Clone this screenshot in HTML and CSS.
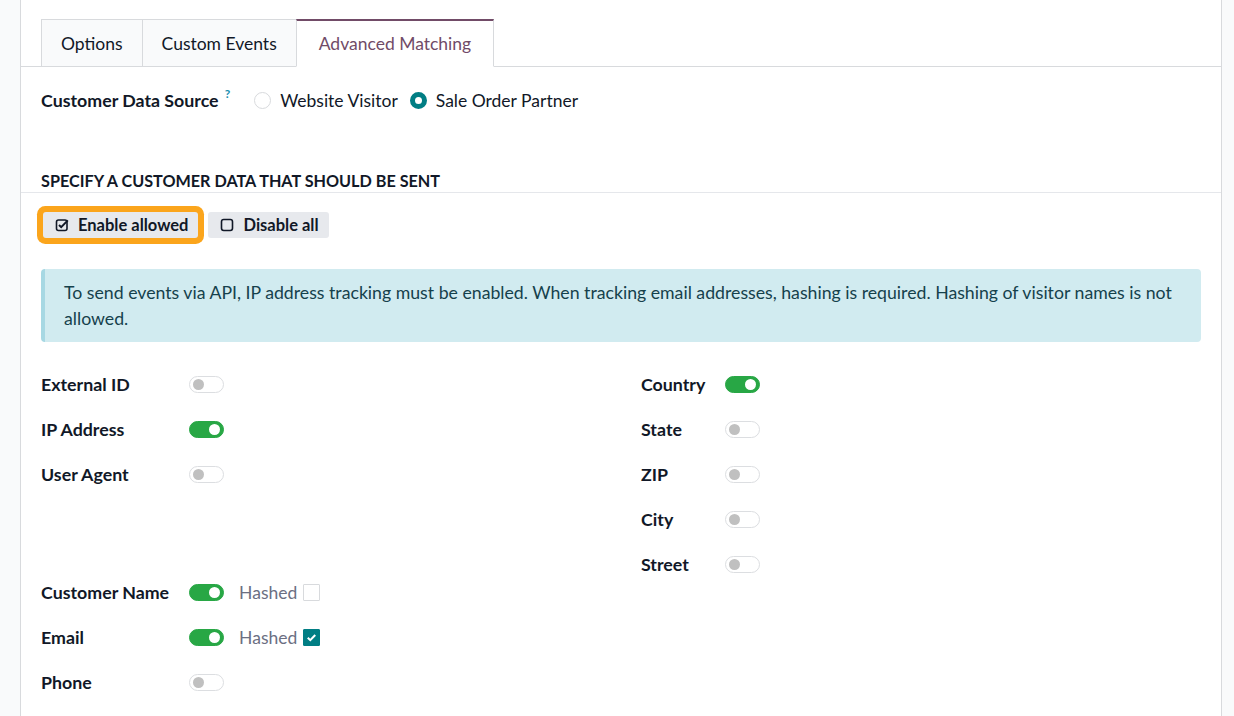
FILE: index.html
```html
<!DOCTYPE html>
<html lang="en">
<head>
    <meta charset="UTF-8">
    <meta name="viewport" content="width=device-width, initial-scale=1.0">
    <title>Advanced Matching</title>
    <link rel="stylesheet" href="styles.css">
</head>
<body>

<div class="sheet">
    <div class="tabs">
        <a class="tab">Options</a>
        <a class="tab">Custom Events</a>
        <a class="tab active">Advanced Matching</a>
    </div>

    <div class="pane">
        <div class="source-row">
            <span class="field-label">Customer Data Source<sup class="help">?</sup></span>
            <label class="radio"><span class="radio-dot"></span>Website Visitor</label>
            <label class="radio checked"><span class="radio-dot"></span>Sale Order Partner</label>
        </div>

        <h3 class="separator">Specify a customer data that should be sent</h3>

        <div class="actions">
            <button class="btn btn-highlight">
                <svg class="btn-icon" viewBox="0 0 14 14" width="14" height="14">
                    <rect x="1.5" y="2" width="10.5" height="10.5" rx="2" fill="none" stroke="currentColor" stroke-width="1.6"/>
                    <path d="M4 7l2.2 2.2L12.8 2.4" fill="none" stroke="currentColor" stroke-width="2"/>
                </svg>
                Enable allowed
            </button>
            <button class="btn">
                <svg class="btn-icon" viewBox="0 0 14 14" width="14" height="14">
                    <rect x="1.5" y="1.5" width="11" height="11" rx="2.2" fill="none" stroke="currentColor" stroke-width="1.6"/>
                </svg>
                Disable all
            </button>
        </div>

        <div class="alert">
            To send events via API, IP address tracking must be enabled. When tracking email addresses, hashing is required. Hashing of visitor names is not allowed.
        </div>

        <div class="fields">
            <div class="field-group">
                <span class="field-label">External ID</span>
                <span class="field-value"><span class="toggle"></span></span>

                <span class="field-label">IP Address</span>
                <span class="field-value"><span class="toggle on"></span></span>

                <span class="field-label">User Agent</span>
                <span class="field-value"><span class="toggle"></span></span>

                <div class="group-gap"></div>

                <span class="field-label">Customer Name</span>
                <span class="field-value">
                    <span class="toggle on"></span>
                    <span class="hashed">Hashed</span>
                    <span class="check"></span>
                </span>

                <span class="field-label">Email</span>
                <span class="field-value">
                    <span class="toggle on"></span>
                    <span class="hashed">Hashed</span>
                    <span class="check checked">
                        <svg viewBox="0 0 10 10" width="11" height="11">
                            <path d="M1.6 5.2l2.3 2.2 4.5-4.6" fill="none" stroke="#fff" stroke-width="1.9"/>
                        </svg>
                    </span>
                </span>

                <span class="field-label">Phone</span>
                <span class="field-value"><span class="toggle"></span></span>
            </div>

            <div class="field-group">
                <span class="field-label">Country</span>
                <span class="field-value"><span class="toggle on"></span></span>

                <span class="field-label">State</span>
                <span class="field-value"><span class="toggle"></span></span>

                <span class="field-label">ZIP</span>
                <span class="field-value"><span class="toggle"></span></span>

                <span class="field-label">City</span>
                <span class="field-value"><span class="toggle"></span></span>

                <span class="field-label">Street</span>
                <span class="field-value"><span class="toggle"></span></span>
            </div>
        </div>
    </div>
</div>

</body>
</html>
```

FILE: styles.css
```css
* {
    box-sizing: border-box;
}
body {
    margin: 0;
    background-color: #f9fafb;
    font-family: Lato, "Open Sans", sans-serif;
    font-size: 17.5px;
    color: #111827;
}
.sheet {
    margin: 0 12px 0 20px;
    min-height: 100vh;
    background-color: #fff;
    border-left: 1px solid #d8dadd;
    border-right: 1px solid #d8dadd;
}

/* notebook tabs */
.tabs {
    display: flex;
    padding: 19px 20px 0;
    border-bottom: 1px solid #d8dadd;
}
.tab {
    height: 48px;
    line-height: 47px;
    padding: 0 19px;
    margin-bottom: -1px;
    background-color: #f9fafb;
    border: 1px solid #d8dadd;
    color: #111827;
    cursor: pointer;
}
.tab + .tab {
    margin-left: -1px;
}
.tab.active {
    padding: 0 22px;
    background-color: #fff;
    border-top: 2px solid #714b67;
    border-bottom-color: #fff;
    color: #714b67;
    line-height: 46px;
}

.pane {
    padding: 20px 20px 0;
}

/* customer data source */
.source-row {
    display: flex;
    align-items: center;
    height: 26px;
}
.field-label {
    font-weight: bold;
    font-size: 17.8px;
    line-height: 24px;
    padding-bottom: 2px;
}
.help {
    color: #1a8fb0;
    font-size: 12px;
    margin-left: 6px;
    vertical-align: 9px;
    line-height: 0;
}
.source-row .field-label {
    margin-right: 24px;
    padding-bottom: 0;
}
.radio {
    display: flex;
    align-items: center;
    margin-right: 12px;
}
.radio-dot {
    width: 17px;
    height: 17px;
    margin-right: 9px;
    border: 1px solid #d8dadd;
    border-radius: 50%;
    background-color: #fff;
}
.radio.checked .radio-dot {
    border: 5px solid #017e84;
}

/* separator */
.separator {
    margin: 57px -20px 0;
    padding: 0 20px;
    height: 23px;
    line-height: 22px;
    font-size: 16.2px;
    font-weight: bold;
    text-transform: uppercase;
    border-bottom: 1px solid #e5e7eb;
}

.actions {
    display: flex;
    gap: 10px;
    margin-top: 19px;
    padding-left: 2px;
}
.btn {
    display: flex;
    align-items: center;
    gap: 9px;
    height: 26px;
    padding: 0 10px 0 12px;
    background-color: #e7e9ed;
    border: none;
    border-radius: 3px;
    font-family: inherit;
    font-size: 16.5px;
    font-weight: bold;
    color: #111827;
    cursor: pointer;
}
.btn-highlight {
    box-shadow: 0 0 0 6px #fba51c;
}
.btn-icon {
    flex-shrink: 0;
}

.alert {
    margin-top: 31px;
    padding: 11px 20px 10px 19px;
    background-color: #d1ebf0;
    border-left: 4px solid #a7d8e3;
    border-radius: 4px;
    color: #15414c;
    font-size: 17.7px;
    line-height: 26px;
}

/* toggle fields */
.fields {
    display: grid;
    grid-template-columns: 1fr 1fr;
    column-gap: 40px;
    margin-top: 20px;
}
.field-group {
    display: grid;
    grid-template-columns: max-content 1fr;
    grid-auto-rows: minmax(45px, auto);
    column-gap: 20px;
    align-items: center;
    align-content: start;
}
.group-gap {
    grid-column: 1 / -1;
    height: 73px;
}
.field-value {
    display: flex;
    align-items: center;
}
.toggle {
    position: relative;
    width: 35px;
    height: 17px;
    border: 1px solid #dcdee1;
    border-radius: 9px;
    background-color: #fff;
}
.toggle::after {
    content: "";
    position: absolute;
    top: 2px;
    left: 3px;
    width: 11px;
    height: 11px;
    border-radius: 50%;
    background-color: #c0c0c0;
}
.toggle.on {
    background-color: #28a745;
    border-color: #28a745;
}
.toggle.on::after {
    left: auto;
    right: 3px;
    background-color: #fff;
}
.hashed {
    margin-left: 15px;
    color: #6b6f82;
}
.check {
    display: flex;
    align-items: center;
    justify-content: center;
    width: 17px;
    height: 17px;
    margin-left: 6px;
    border: 1px solid #d8dadd;
    border-radius: 1px;
}
.check.checked {
    background-color: #017e84;
    border-color: #017e84;
}
```
